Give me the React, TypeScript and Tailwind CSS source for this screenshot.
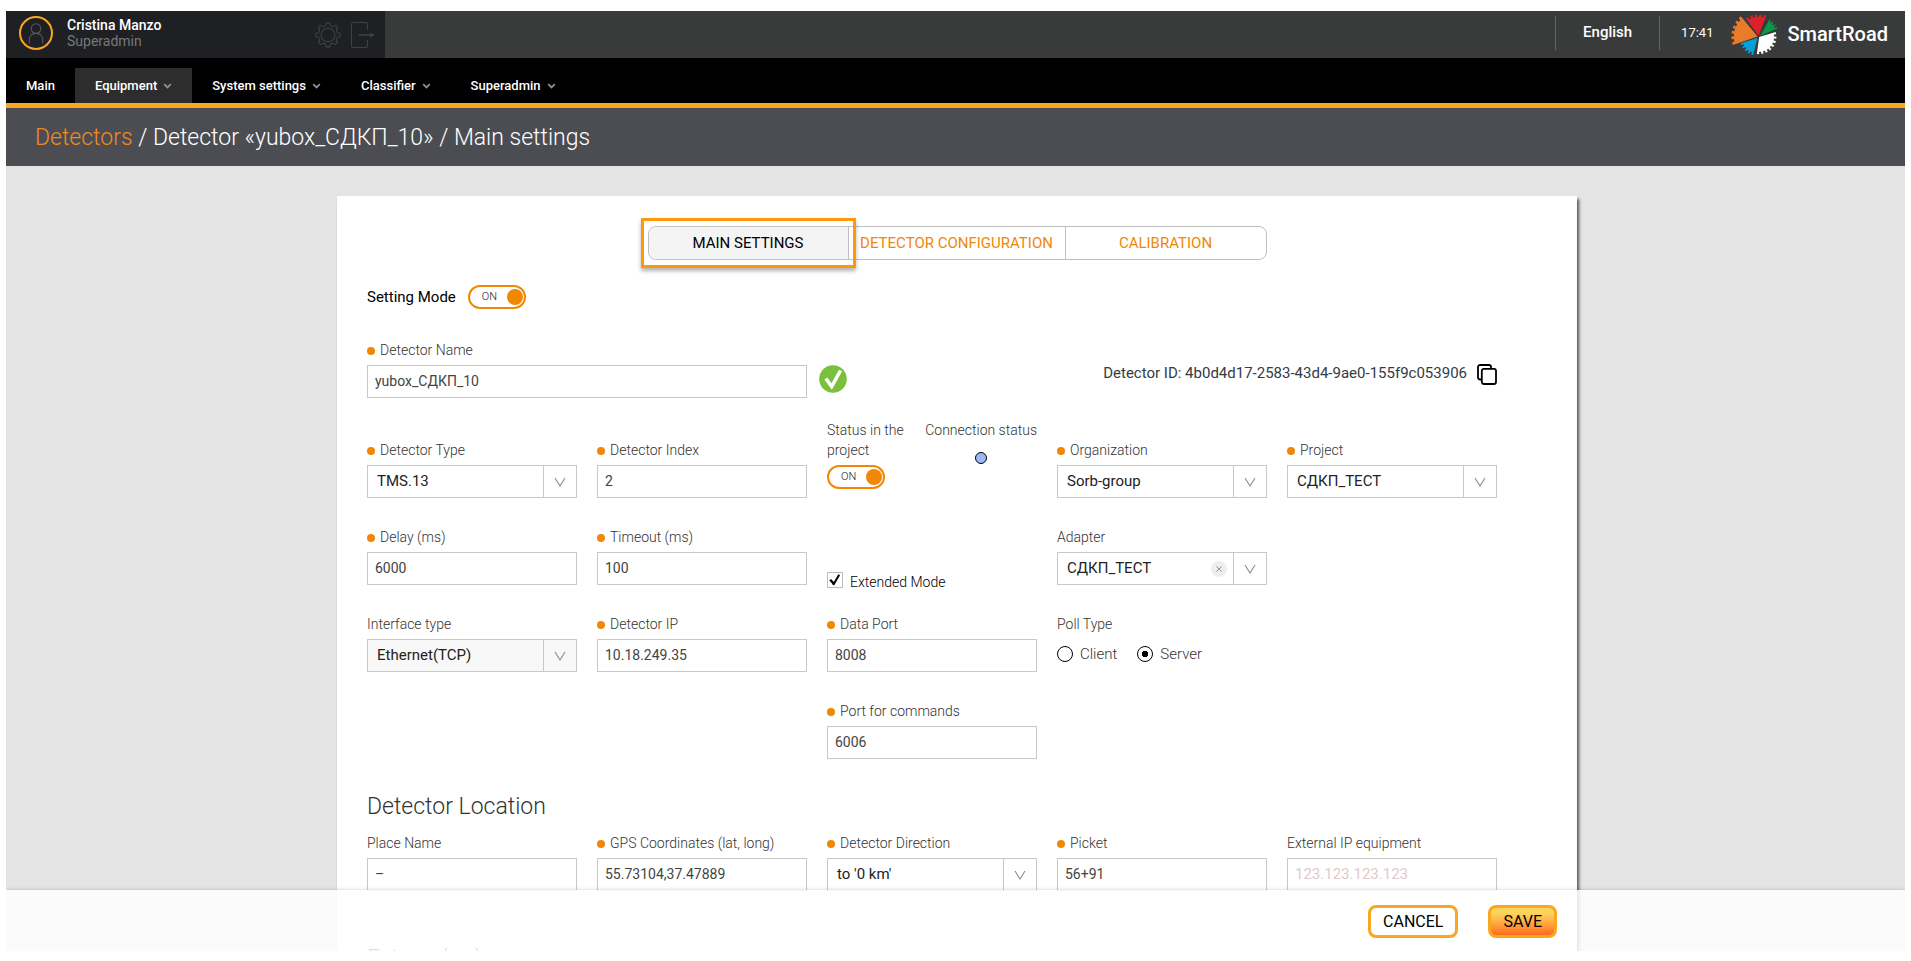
import { useState } from "react";
import type { ReactNode } from "react";

const point = (cx: number, cy: number, r: number, deg: number) => {
  const a = (deg * Math.PI) / 180;
  return `${(cx + r * Math.cos(a)).toFixed(2)} ${(cy + r * Math.sin(a)).toFixed(2)}`;
};

/** A wedge of a cog wheel, with square teeth along its arc. */
function cogWedge(cx: number, cy: number, r: number, from: number, to: number, teeth: number) {
  const steps = teeth * 2 - 1;
  const size = (to - from) / steps;
  const parts = [`M${cx} ${cy}`];
  for (let i = 0; i < steps; i++) {
    const radius = i % 2 === 0 ? r : r - 2.4;
    parts.push(`L${point(cx, cy, radius, from + i * size)}`);
    parts.push(`L${point(cx, cy, radius, from + (i + 1) * size)}`);
  }
  return parts.join("") + "Z";
}

function gearOutline(cx: number, cy: number, outer: number, inner: number, teeth: number) {
  const step = 360 / teeth;
  let d = "";
  for (let i = 0; i < teeth; i++) {
    const a = i * step;
    d += `${i === 0 ? "M" : "L"}${point(cx, cy, outer, a - step * 0.17)}`;
    d += `L${point(cx, cy, outer, a + step * 0.17)}`;
    d += `L${point(cx, cy, inner, a + step * 0.3)}`;
    d += `Q${point(cx, cy, inner - 1, a + step * 0.5)} ${point(cx, cy, inner, a + step * 0.7)}`;
  }
  return d + "Z";
}

function Logo() {
  return (
    <svg width="46" height="42" viewBox="0 0 46 42" aria-hidden="true">
      <path d={cogWedge(26.6, 22.4, 26.2, 161, 230, 6)} fill="#e97c2a" />
      <path d={cogWedge(27.6, 21.8, 21.4, 234, 291, 5)} fill="#dc2128" />
      <path d={cogWedge(29.4, 21.8, 18.6, 299, 336, 4)} fill="#0b9a48" />
      <path d={cogWedge(28.2, 23, 17.2, -17, 98, 8)} fill="#ffffff" />
      <path d={cogWedge(26.6, 24, 17.8, 105, 163, 5)} fill="#069fdb" />
    </svg>
  );
}

function Chevron() {
  return (
    <svg width="9" height="6" viewBox="0 0 9 6" fill="none" stroke="#8f8f8f" strokeWidth="1.8" aria-hidden="true">
      <path d="M1.2 1.2 4.5 4.4 7.8 1.2" />
    </svg>
  );
}

function Toggle({ label }: { label: string }) {
  const [on, setOn] = useState(true);
  return (
    <button
      type="button"
      role="switch"
      aria-checked={on}
      aria-label={label}
      onClick={() => setOn(!on)}
      className="flex h-6 w-[58px] items-center justify-between rounded-full border-2 border-[#f08705] bg-white pr-px pl-3 text-[11px] font-light text-[#222]"
    >
      {on ? "ON" : "OFF"}
      <span className="size-4 rounded-full bg-[#f08705]" />
    </button>
  );
}

function Label({ id, required, children }: { id?: string; required?: boolean; children: ReactNode }) {
  return (
    <label htmlFor={id} className="flex h-5 items-center gap-[5px] text-sm font-light whitespace-nowrap text-[#333]">
      {required && <span className="mt-0.5 size-2 shrink-0 rounded-full bg-[#f08705]" />}
      {children}
    </label>
  );
}

type FieldProps = { id: string; label: string; value?: string; required?: boolean; placeholder?: string; className?: string };

function TextField({ id, label, value, required, placeholder, className }: FieldProps) {
  return (
    <div className={`flex flex-col gap-[5px] ${className ?? ""}`}>
      <Label id={id} required={required}>{label}</Label>
      <input
        id={id}
        type="text"
        defaultValue={value}
        placeholder={placeholder}
        className="h-[33px] w-full border border-[#c8c8c8] bg-white px-[7px] pb-px text-sm text-[#444] outline-none placeholder:text-[15px] placeholder:text-[#e2c9cb]"
      />
    </div>
  );
}

function SelectField({ id, label, value, required, disabled, clearable, className }: FieldProps & { disabled?: boolean; clearable?: boolean }) {
  return (
    <div className={`flex flex-col gap-[5px] ${className ?? ""}`}>
      <Label id={id} required={required}>{label}</Label>
      <div className="relative">
        <select
          id={id}
          disabled={disabled}
          defaultValue={value}
          className="h-[33px] w-full appearance-none border border-[#c8c8c8] bg-white pr-10 pl-[9px] text-[15px] text-[#222] opacity-100 outline-none disabled:bg-[#f8f8f8]"
        >
          <option>{value}</option>
        </select>
        {clearable && (
          <button
            type="button"
            aria-label={`Clear ${label}`}
            className="absolute top-[9px] right-10 flex size-4 items-center justify-center rounded-full bg-[#eeeeee]"
          >
            <svg width="6" height="6" viewBox="0 0 6 6" stroke="#8a8a8a" strokeWidth="0.9" aria-hidden="true">
              <path d="M.3.3 5.7 5.7M5.7.3.3 5.7" />
            </svg>
          </button>
        )}
        <span className="pointer-events-none absolute inset-y-0 right-0 flex w-[34px] items-center justify-center border-l border-[#c8c8c8] pr-0.5">
          <svg width="12" height="10" viewBox="0 0 12 10" fill="none" stroke="#8c8c8c" strokeWidth="1.1" aria-hidden="true">
            <path d="M1 1 6 9 11 1" />
          </svg>
        </span>
      </div>
    </div>
  );
}

function Radio({ label, checked }: { label: string; checked?: boolean }) {
  return (
    <label className="flex items-center gap-[7px] text-[15px] font-light text-[#333]">
      <input
        type="radio"
        name="poll"
        defaultChecked={checked}
        className="size-4 appearance-none rounded-full border border-black bg-white checked:bg-[radial-gradient(circle,#000_3px,#fff_3.5px)]"
      />
      {label}
    </label>
  );
}

function NavItem({ label, active, menu = true }: { label: string; active?: boolean; menu?: boolean }) {
  return (
    <a
      href="#"
      aria-current={active ? "page" : undefined}
      className={`flex h-[35px] items-center gap-1.5 px-5 text-[13px] font-medium ${active ? "bg-[#2d2d2d]" : ""}`}
    >
      {label}
      {menu && <Chevron />}
    </a>
  );
}

export default function App() {
  return (
    <div className="h-screen overflow-hidden bg-white pt-[11px] pr-1.5 pb-2.5 pl-1.5 font-['Roboto',sans-serif]">
      <div className="relative flex h-full flex-col overflow-hidden">
        <header className="flex h-[47px] shrink-0 justify-between bg-[#393a3a] text-white">
          <div className="flex w-[379px] items-center bg-[#1f2023] pr-2.5 pl-[13px]">
            <svg width="34" height="34" viewBox="0 0 34 34" fill="none" className="mb-1" aria-hidden="true">
              <circle cx="17" cy="17" r="16" stroke="#f9a722" strokeWidth="2" />
              <g stroke="#56585c" strokeWidth="1.1">
                <circle cx="17" cy="12.6" r="4.8" />
                <path d="M10.3 27.6V24c0-4 2.7-6.6 6.7-6.6s6.7 2.600 6.700 6.600v3.600" />
              </g>
            </svg>
            <div className="mb-1 ml-3.5 flex-1">
              <div className="text-sm/4 font-medium">Cristina Manzo</div>
              <div className="text-sm/4 text-[#77787a]">Superadmin</div>
            </div>
            <button type="button" aria-label="Settings">
              <svg width="26" height="26" viewBox="0 0 26 26" fill="none" stroke="#3f4043" strokeWidth="1.1" strokeLinejoin="round" aria-hidden="true">
                <path d={gearOutline(13, 13, 12.2, 9.8, 8)} />
                <circle cx="13" cy="13" r="6.800" />
              </svg>
            </button>
            <button type="button" aria-label="Log out" className="ml-2.5">
              <svg width="24" height="26" viewBox="0 0 24 26" fill="none" stroke="#3f4043" strokeWidth="1.1" aria-hidden="true">
                <path d="M16.500 8V2.500a2 2 0 0 0-2-2h-12a2 2 0 0 0-2 2v21a2 2 0 0 0 2 2h12a2 2 0 0 0 2-2V18" />
                <path d="M8 13h15" strokeWidth="1.600" />
                <path d="M19.500 10.300 23.500 13l-4 2.700z" fill="#3f4043" stroke="none" />
              </svg>
            </button>
          </div>
          <div className="flex items-center pr-[17px]">
            <button type="button" className="mb-1 h-[34px] border-x border-[#636464] px-[27px] text-[15px] font-medium">
              English
            </button>
            <time className="mr-[18px] mb-1 ml-[21px] text-[13px]">17:41</time>
            <Logo />
            <span className="mb-0.5 ml-[10px] text-xl font-medium">SmartRoad</span>
          </div>
        </header>

        <nav className="flex h-[50px] shrink-0 items-end border-b-[5px] border-[#f9a722] bg-black text-white">
          <NavItem label="Main" menu={false} />
          <NavItem label="Equipment" active />
          <NavItem label="System settings" />
          <NavItem label="Classifier" />
          <NavItem label="Superadmin" />
        </nav>

        <h1 className="flex h-[58px] shrink-0 items-center bg-[#4c4d52] px-[29px] pt-0.5 text-[23px] font-light whitespace-pre text-white">
          <a href="#" className="text-[#f08a1c]">Detectors</a> / Detector «yubox_СДКП_10» / Main settings
        </h1>

        <main className="min-h-0 flex-1 overflow-hidden bg-[#e4e4e4] pt-[30px] pl-[3px]">
          <div className="mx-auto min-h-full w-full max-w-[1240px] bg-white pt-[30px] pr-20 pb-20 pl-[30px] shadow-[2px_3px_3px_rgba(0,0,0,0.65)]">
            <div className="-mr-[50px] flex justify-center">
              <div role="tablist" className="flex h-[34px] rounded-lg border border-[#c0c0c0] text-[15px]">
                <button
                  type="button"
                  role="tab"
                  aria-selected="true"
                  className="relative w-[200px] rounded-l-lg border-r border-[#c0c0c0] bg-[#f4f4f4] text-black"
                >
                  MAIN SETTINGS
                  <span className="pointer-events-none absolute -inset-x-2 -inset-y-[9px] border-3 border-[#ff9808] shadow-[0_3px_4px_rgba(0,0,0,0.3)]" />
                </button>
                <button type="button" role="tab" aria-selected="false" className="w-[217px] border-r border-[#c0c0c0] text-[#f08705]">
                  DETECTOR CONFIGURATION
                </button>
                <button type="button" role="tab" aria-selected="false" className="w-[200px] text-[#f08705]">
                  CALIBRATION
                </button>
              </div>
            </div>

            <div className="mt-[25px] flex h-6 items-center gap-3 text-[15px] text-black">
              Setting Mode
              <Toggle label="Setting Mode" />
            </div>

            <div className="mt-[31px] grid grid-cols-5 gap-x-5">
              <TextField id="name" label="Detector Name" value="yubox_СДКП_10" required className="col-span-2" />
              <svg width="28" height="28" viewBox="0 0 28 28" className="mt-[25px] ml-[-8px]" role="img" aria-label="Valid">
                <circle cx="14" cy="14" r="13.800" fill="#7ac03c" />
                <path d="M6.800 13.500 12.700 21.500 21.500 5.500" fill="none" stroke="#fff" strokeWidth="3.600" />
              </svg>
              <div className="col-span-2 flex items-start justify-end gap-2.5 pt-[22px] text-[15px] text-[#333b45]">
                Detector ID: 4b0d4d17-2583-43d4-9ae0-155f9c053906
                <button type="button" aria-label="Copy detector ID" className="pt-0.5">
                  <svg width="20" height="21" viewBox="0 0 20 21" fill="none" stroke="#000" strokeWidth="1.800" aria-hidden="true">
                    <path d="M4.600 15.500H3a2 2 0 0 1-2-2V3a2 2 0 0 1 2-2h9a2 2 0 0 1 2 2v1.200" />
                    <rect x="4.800" y="4.800" width="14.200" height="15.200" rx="2" />
                  </svg>
                </button>
              </div>
            </div>

            <div className="mt-[22px] grid grid-cols-5 items-end gap-x-5">
              <SelectField id="type" label="Detector Type" value="TMS.13" required />
              <TextField id="index" label="Detector Index" value="2" required />
              <div className="flex justify-between pb-[9px] text-sm leading-5 font-light text-[#333]">
                <div className="flex w-20 flex-col gap-[5px]">
                  Status in the project
                  <Toggle label="Status in the project" />
                </div>
                <div className="flex flex-col items-center gap-3 whitespace-nowrap">
                  Connection status
                  <span className="size-3 rounded-full border border-black bg-[#98b9fb]" />
                </div>
              </div>
              <SelectField id="org" label="Organization" value="Sorb-group" required />
              <SelectField id="project" label="Project" value="СДКП_ТЕСТ" required />
            </div>

            <div className="mt-[29px] grid auto-rows-[58px] grid-cols-5 gap-x-5 gap-y-[29px]">
              <TextField id="delay" label="Delay (ms)" value="6000" required />
              <TextField id="timeout" label="Timeout (ms)" value="100" required />
              <label className="flex items-start gap-[7px] pt-[45px] text-sm text-black">
                <input
                  type="checkbox"
                  defaultChecked
                  className="peer size-4 appearance-none border border-[#bdbdbd] bg-white"
                />
                <svg width="12" height="12" viewBox="0 0 12 12" fill="none" stroke="#000" className="mt-0.5 -ml-[21px] hidden peer-checked:block" aria-hidden="true">
                  <path d="M1.200 5.800 4.600 9.500" strokeWidth="2.400" />
                  <path d="M4.200 11 10.200.800" strokeWidth="2" />
                </svg>
                <span className="ml-0.5 leading-5 font-light">Extended Mode</span>
              </label>
              <SelectField id="adapter" label="Adapter" value="СДКП_ТЕСТ" clearable />

              <SelectField id="interface" label="Interface type" value="Ethernet(TCP)" disabled className="col-start-1" />
              <TextField id="ip" label="Detector IP" value="10.18.249.35" required />
              <TextField id="data-port" label="Data Port" value="8008" required />
              <fieldset className="flex flex-col gap-[5px]">
                <legend className="contents text-sm font-light text-[#333]">
                  <span className="h-5 leading-5">Poll Type</span>
                </legend>
                <div className="flex h-[30px] items-center gap-5">
                  <Radio label="Client" />
                  <Radio label="Server" checked />
                </div>
              </fieldset>

              <TextField id="command-port" label="Port for commands" value="6006" required className="col-start-3" />
            </div>

            <h2 className="mt-[33px] text-[23px] leading-[30px] font-light text-[#333]">Detector Location</h2>
            <div className="mt-[11px] grid grid-cols-5 gap-x-5">
              <TextField id="place" label="Place Name" value="–" />
              <TextField id="gps" label="GPS Coordinates (lat, long)" value="55.73104,37.47889" required />
              <SelectField id="direction" label="Detector Direction" value="to '0 km'" required />
              <TextField id="picket" label="Picket" value="56+91" required />
              <TextField id="external-ip" label="External IP equipment" placeholder="123.123.123.123" />
            </div>
            <h2 className="mt-[53px] text-[23px] leading-[30px] font-light text-[#333]">External ad</h2>
          </div>
        </main>

        <footer className="absolute inset-x-0 bottom-0 bg-white/85 pl-[3px] shadow-[0_0_4px_rgba(0,0,0,0.2)]">
          <div className="mx-auto flex h-[61px] w-full max-w-[1240px] items-start justify-end gap-[30px] px-5 pt-[15px] text-base text-black">
            <button type="button" className="h-[33px] rounded-lg border-3 border-[#f9a722] bg-white px-3 leading-none">CANCEL</button>
            <button type="button" className="h-[33px] rounded-lg border-3 border-[#f9a722] bg-linear-to-b from-[#fbd45c] from-20% to-[#fb6a1c] px-3 leading-none">
              SAVE
            </button>
          </div>
        </footer>
      </div>
    </div>
  );
}
